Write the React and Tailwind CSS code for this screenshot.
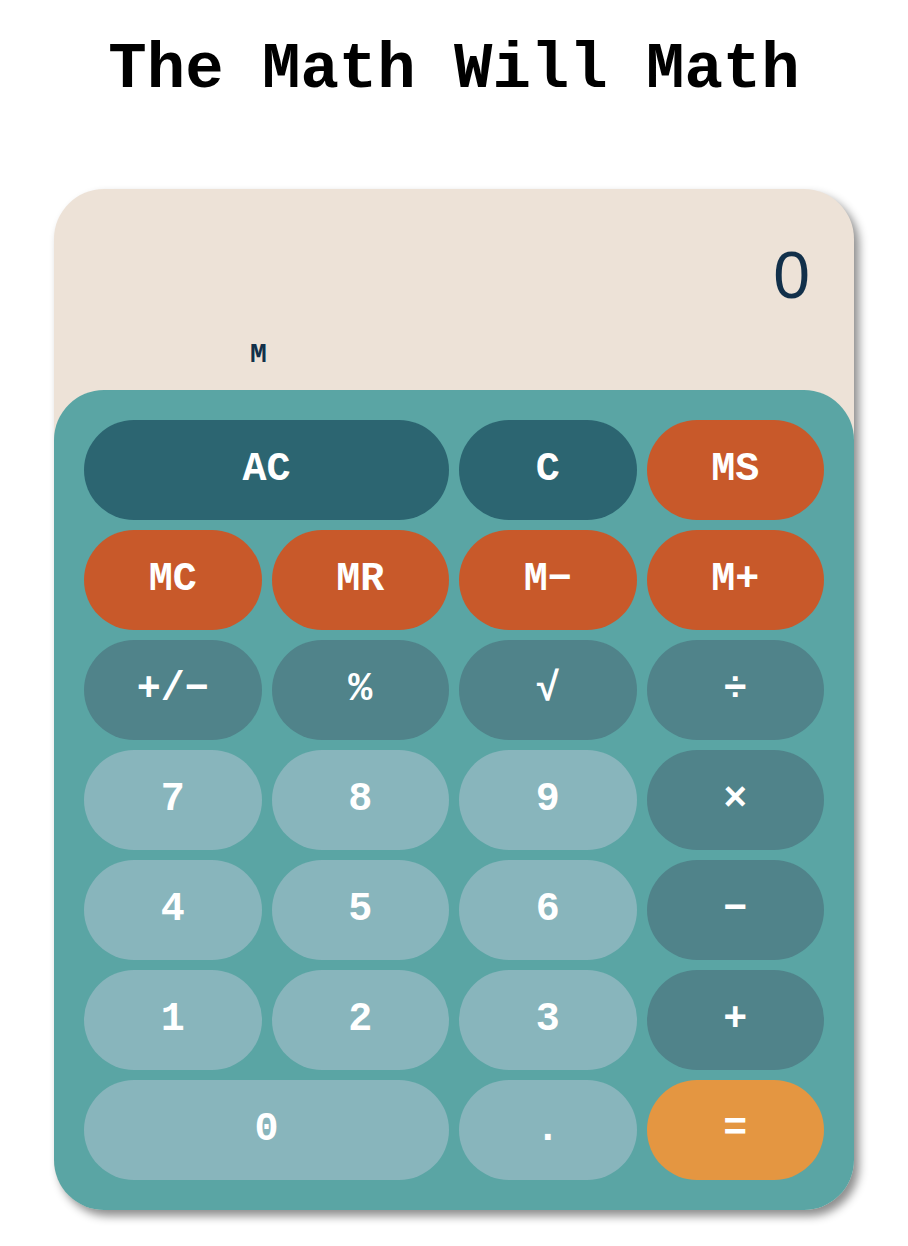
import React from "react";

const mono = "font-['Liberation_Mono','Courier_New',monospace]";

// button styles by kind
const kinds = {
  clear: "bg-[#2c6571]",
  mem: "bg-[#c8592a]",
  op: "bg-[#50838a]",
  num: "bg-[#88b5bc]",
  eq: "bg-[#e49641]",
};

const keys = [
  { label: "AC", kind: "clear", wide: true },
  { label: "C", kind: "clear" },
  { label: "MS", kind: "mem" },
  { label: "MC", kind: "mem" },
  { label: "MR", kind: "mem" },
  { label: "M−", kind: "mem" },
  { label: "M+", kind: "mem" },
  { label: "+/−", kind: "op" },
  { label: "%", kind: "op" },
  { label: "√", kind: "op" },
  { label: "÷", kind: "op" },
  { label: "7", kind: "num" },
  { label: "8", kind: "num" },
  { label: "9", kind: "num" },
  { label: "×", kind: "op" },
  { label: "4", kind: "num" },
  { label: "5", kind: "num" },
  { label: "6", kind: "num" },
  { label: "−", kind: "op" },
  { label: "1", kind: "num" },
  { label: "2", kind: "num" },
  { label: "3", kind: "num" },
  { label: "+", kind: "op" },
  { label: "0", kind: "num", wide: true },
  { label: ".", kind: "num" },
  { label: "=", kind: "eq" },
];

export default function App() {
  const [display, setDisplay] = React.useState("0");

  return (
    <div className="min-h-screen bg-white flex flex-col items-center">
      <h1 className={`${mono} font-bold text-[64px] leading-none text-black mt-[38px]`}>
        The Math Will Math
      </h1>

      <div className="mt-[87px] w-[800px] bg-[#ede2d7] rounded-[50px] shadow-[5px_6px_10px_rgba(0,0,0,0.45)]">
        {/* DISPLAY */}
        <div className="h-[201px] flex flex-col">
          <div className="pt-[53px] pr-[44px] text-right font-['Liberation_Sans',Arial,sans-serif] text-[66px] leading-none text-[#12304a]">
            {display}
          </div>
          <div className={`${mono} font-bold text-[28px] leading-none text-[#12304a] pl-[196px] mt-[33px]`}>
            M
          </div>
        </div>

        {/* KEYPAD */}
        <div className="bg-[#5aa5a4] rounded-[50px] p-[30px] grid grid-cols-4 gap-[10px]">
          {keys.map((k) => (
            <button
              key={k.label}
              onClick={() => k.kind === "num" && setDisplay(k.label)}
              className={`${kinds[k.kind]} ${k.wide ? "col-span-2" : ""} ${mono} h-[100px] rounded-full text-white font-bold text-[40px] leading-none flex items-center justify-center`}
            >
              {k.label}
            </button>
          ))}
        </div>
      </div>
    </div>
  );
}
